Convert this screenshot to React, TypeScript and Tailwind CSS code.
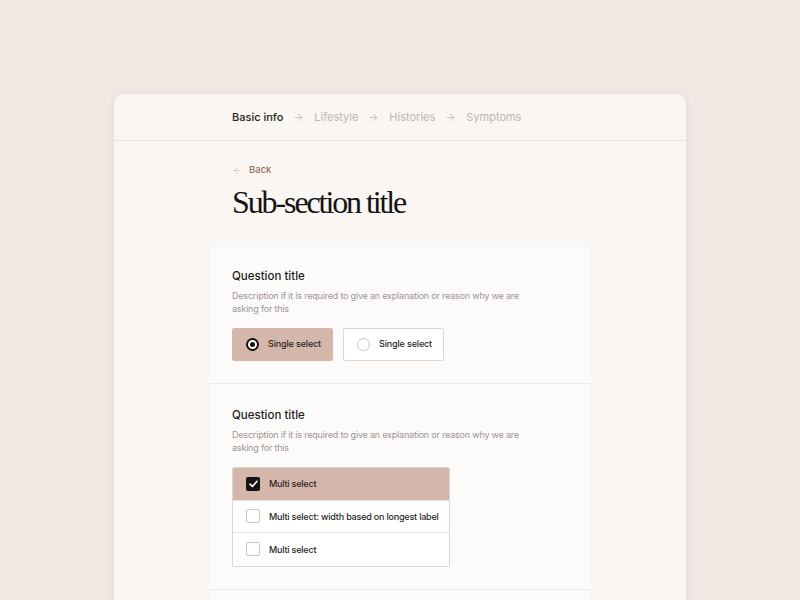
import { ArrowLeft, ArrowRight } from "lucide-react";

const steps = ["Basic info", "Lifestyle", "Histories", "Symptoms"];

const sans = "font-['Inter','Liberation_Sans',sans-serif]";

export default function App() {
  return (
    <main
      className={`h-[600px] overflow-hidden bg-[#efe8e3] flex justify-center pt-[94px] ${sans}`}
    >
      <div className="w-[572px] h-[620px] shrink-0 rounded-[10px] bg-[#f9f6f3] shadow-[0_1px_6px_rgba(120,90,70,0.10)]">
        {/* STEPS */}
        <div className="h-[47px] border-b border-[#ebe4de] flex items-center pl-[118px] gap-[10px] text-[11px]">
          {steps.map((s, i) => (
            <div key={s} className="flex items-center gap-[10px]">
              {i > 0 && (
                <ArrowRight
                  size={11}
                  strokeWidth={1.6}
                  className="text-[#b5ada8]"
                />
              )}
              <span
                className={
                  i === 0
                    ? "text-[#2a2522] font-medium"
                    : "text-[#bdb5b0]"
                }
              >
                {s}
              </span>
            </div>
          ))}
        </div>

        <div className="w-[380px] mx-auto pt-[22px]">
          <div className="pl-[22px] h-[14px] flex items-center gap-[6px]">
            <ArrowLeft
              size={11}
              strokeWidth={1.5}
              className="text-[#d9b8ab]"
            />
            <span className="text-[9.5px] text-[#96705f] font-medium">
              Back
            </span>
          </div>

          <h1 className="pl-[22px] mt-[5px] h-[40px] leading-[40px] text-[32px] tracking-[-2.1px] text-[#161312] font-['Liberation_Serif',serif]">
            Sub-section title
          </h1>

          <div className="mt-[24px] rounded-[4px] bg-[#fdfbfa] shadow-[0_0_2px_rgba(120,90,70,0.06)]">
            {/* SINGLE */}
            <Section className="pt-[22px] pb-[22px]" gap="mt-[12.5px]">
              <div className="flex gap-[10px]">
                <Radio label="Single select" checked />
                <Radio label="Single select" />
              </div>
            </Section>

            {/* MULTI */}
            <Section
              className="pt-[23px] pb-[22px] border-t border-[#eee7e2]"
              gap="mt-[13.5px]"
            >
              <div className="w-[218px] rounded-[2px] border border-[#ddd5d0] overflow-hidden bg-white">
                <Check label="Multi select" checked />
                <Check label="Multi select: width based on longest label" />
                <Check label="Multi select" />
              </div>
            </Section>

            <div className="h-[40px] border-t border-[#eee7e2]" />
          </div>
        </div>
      </div>
    </main>
  );
}

function Section({
  children,
  className,
  gap,
}: {
  children: React.ReactNode;
  className: string;
  gap: string;
}) {
  return (
    <div className={`px-[22px] ${className}`}>
      <h2 className="text-[11.5px] leading-[16px] font-medium text-[#1f1b19]">
        Question title
      </h2>
      <p className="mt-[5px] w-[300px] text-[9px] tracking-[-0.2px] leading-[13px] text-[#9c9490]">
        Description if it is required to give an explanation or reason why we
        are asking for this
      </p>
      <div className={gap}>{children}</div>
    </div>
  );
}

function Radio({ label, checked }: { label: string; checked?: boolean }) {
  return (
    <button
      className={`w-[101px] h-[33px] rounded-[2px] border flex items-center gap-[9px] pl-[13px] text-[9px] tracking-[-0.15px] font-medium text-[#2b2624] ${
        checked
          ? "bg-[#d4b6ab] border-[#d4b6ab]"
          : "bg-white border-[#ddd5d0]"
      }`}
    >
      {checked ? (
        <span className="w-[13px] h-[13px] rounded-full border-[2px] border-[#141110] bg-white flex items-center justify-center">
          <span className="w-[5px] h-[5px] rounded-full bg-[#141110]" />
        </span>
      ) : (
        <span className="w-[13px] h-[13px] rounded-full border border-[#cfc7c2] bg-white" />
      )}
      {label}
    </button>
  );
}

function Check({ label, checked }: { label: string; checked?: boolean }) {
  return (
    <div
      className={`h-[32.5px] flex items-center gap-[9px] pl-[13px] whitespace-nowrap text-[9px] tracking-[-0.2px] font-medium text-[#2b2624] border-b border-[#e6dfda] last:border-b-0 ${
        checked ? "bg-[#d4b6ab]" : "bg-white"
      }`}
    >
      {checked ? (
        <span className="w-[14px] h-[14px] rounded-[2px] bg-[#161312] flex items-center justify-center">
          <svg width="9" height="8" viewBox="0 0 9 8" fill="none">
            <path
              d="M1 4.2L3.4 6.5L8 1.3"
              stroke="white"
              strokeWidth="1.6"
              strokeLinecap="round"
              strokeLinejoin="round"
            />
          </svg>
        </span>
      ) : (
        <span className="w-[14px] h-[14px] rounded-[2px] border border-[#cfc7c2] bg-white" />
      )}
      {label}
    </div>
  );
}
